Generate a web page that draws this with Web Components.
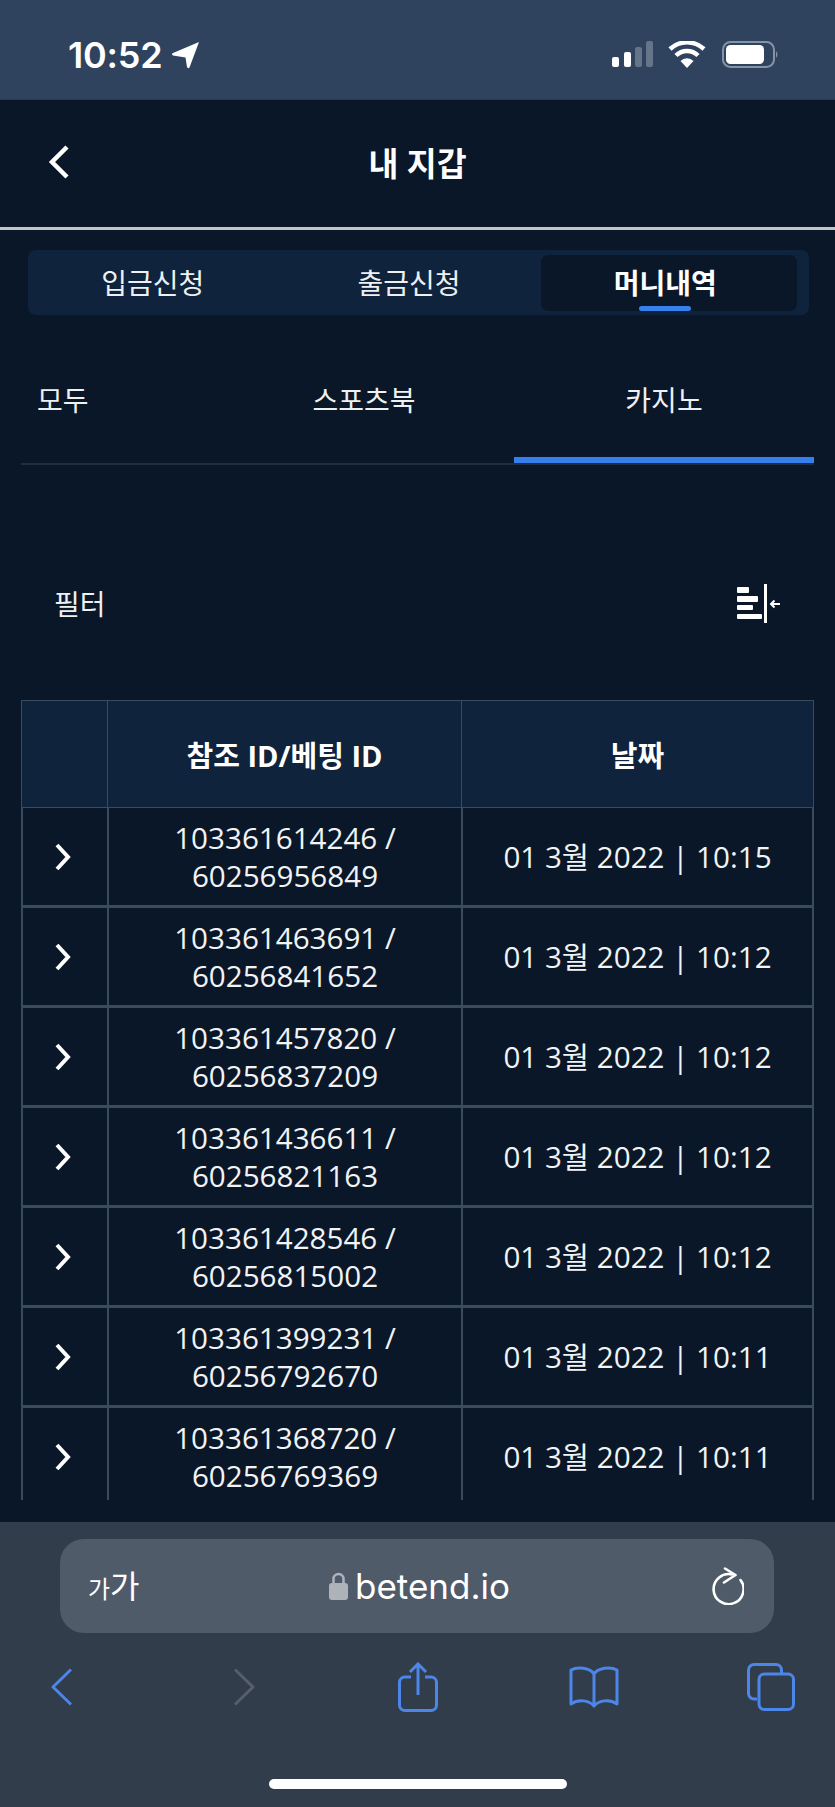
<!DOCTYPE html>
<html lang="ko">
<head>
<meta charset="utf-8">
<title>내 지갑</title>
<style>
    html, body {
        margin: 0;
        padding: 0;
        background: #0a1728;
    }

    body {
        width: 835px;
        height: 1807px;
        overflow: hidden;
        display: flex;
        flex-direction: column;
        color: #fff;
        font-family: "Noto Sans", "Noto Sans CJK KR", sans-serif;
    }
</style>
</head>
<body>
    <status-bar time="10:52"></status-bar>
    <wallet-header>내 지갑</wallet-header>
    <segment-tabs>
        <tab-item>입금신청</tab-item>
        <tab-item>출금신청</tab-item>
        <tab-item active>머니내역</tab-item>
    </segment-tabs>
    <category-tabs></category-tabs>
    <filter-bar>필터</filter-bar>
    <bet-table>
        <bet-row ref-id="103361614246" bet-id="60256956849" date="01 3월 2022 | 10:15"></bet-row>
        <bet-row ref-id="103361463691" bet-id="60256841652" date="01 3월 2022 | 10:12"></bet-row>
        <bet-row ref-id="103361457820" bet-id="60256837209" date="01 3월 2022 | 10:12"></bet-row>
        <bet-row ref-id="103361436611" bet-id="60256821163" date="01 3월 2022 | 10:12"></bet-row>
        <bet-row ref-id="103361428546" bet-id="60256815002" date="01 3월 2022 | 10:12"></bet-row>
        <bet-row ref-id="103361399231" bet-id="60256792670" date="01 3월 2022 | 10:11"></bet-row>
        <bet-row ref-id="103361368720" bet-id="60256769369" date="01 3월 2022 | 10:11"></bet-row>
    </bet-table>
    <safari-bar url="betend.io"></safari-bar>

<script>
class StatusBar extends HTMLElement {
    constructor() {
        super();
        this.attachShadow({ mode: 'open' });
    }

    connectedCallback() {
        this.shadowRoot.innerHTML = `
            <style>
                :host {
                    display: flex;
                    flex: none;
                    align-items: center;
                    box-sizing: border-box;
                    height: 100px;
                    padding: 10px 55px 0 68px;
                    background: #2f435f;
                    border-bottom: 1px solid #2a3b54;
                }
                .time {
                    font: 600 36px/1 Inter, "Liberation Sans", sans-serif;
                    letter-spacing: -0.2px;
                }
                .loc { margin-left: 8px; }
                .right { margin-left: auto; }
            </style>
            <span class="time">${this.getAttribute('time')}</span>
            <svg class="loc" width="29" height="28" viewBox="0 0 29 28">
                <path d="M28 1 L18.5 26.5 Q17 28 16 26 L14.500 16.500 L2 14.500 Q0 13 2 12 Z" fill="#fff"/>
            </svg>
            <svg class="right" width="168" height="28" viewBox="0 0 168 28">
                <rect x="0" y="16" width="7" height="10" rx="2" fill="#fff"/>
                <rect x="12" y="11" width="7" height="15" rx="2" fill="#fff"/>
                <rect x="23" y="6" width="7" height="20" rx="2" fill="#647489"/>
                <rect x="34" y="0" width="7" height="26" rx="2" fill="#647489"/>
                <path d="M58 8 A25 25 0 0 1 92 8" fill="none" stroke="#fff" stroke-width="4.500"/>
                <path d="M64 14.500 A15.500 15.500 0 0 1 86 14.500" fill="none" stroke="#fff" stroke-width="4.500"/>
                <path d="M68.500 20 A9 9 0 0 1 81.500 20 L75 27 Z" fill="#fff"/>
                <rect x="111" y="1" width="51" height="25" rx="7.500" fill="none" stroke="#8593a6" stroke-width="2"/>
                <rect x="114" y="4" width="38" height="19" rx="4.500" fill="#fff"/>
                <path d="M164 10 Q167 13.500 164 17 Z" fill="#8593a6"/>
            </svg>
        `;
    }
}

class WalletHeader extends HTMLElement {
    constructor() {
        super();
        this.attachShadow({ mode: 'open' });
    }

    connectedCallback() {
        this.shadowRoot.innerHTML = `
            <style>
                :host {
                    display: flex;
                    flex: none;
                    align-items: center;
                    justify-content: center;
                    position: relative;
                    box-sizing: border-box;
                    height: 130px;
                    padding-top: 2px;
                    border-bottom: 3px solid #c2c4c8;
                    font: 700 32.5px/1 "Noto Sans", "Noto Sans CJK KR", sans-serif;
                }
                svg {
                    position: absolute;
                    left: 47px;
                    top: 44px;
                }
            </style>
            <svg width="24" height="36" viewBox="0 0 24 36">
                <path d="M20 3 L5 18 L20 33" fill="none" stroke="#fff" stroke-width="4.500"/>
            </svg>
            <slot></slot>
        `;
    }
}

class SegmentTabs extends HTMLElement {
    constructor() {
        super();
        this.attachShadow({ mode: 'open' });
    }

    connectedCallback() {
        this.shadowRoot.innerHTML = `
            <style>
                :host {
                    display: grid;
                    flex: none;
                    grid-template-columns: repeat(3, 1fr);
                    box-sizing: border-box;
                    width: 781px;
                    height: 65px;
                    margin: 20px 0 0 28px;
                    padding: 5px 12px 4px 0;
                    background: #10233c;
                    border-radius: 8px;
                }
            </style>
            <slot></slot>
        `;
    }
}

class TabItem extends HTMLElement {
    constructor() {
        super();
        this.attachShadow({ mode: 'open' });
    }

    connectedCallback() {
        this.shadowRoot.innerHTML = `
            <style>
                :host {
                    display: flex;
                    align-items: center;
                    justify-content: center;
                    position: relative;
                    padding: 0 7px 2px 0;
                    font-size: 28px;
                    color: #eef0f2;
                }
                :host([active]) {
                    background: #0a1728;
                    border-radius: 7px;
                    font-weight: 700;
                    color: #fff;
                }
                :host([active])::after {
                    content: "";
                    position: absolute;
                    left: calc(50% - 30px);
                    bottom: 0;
                    width: 52px;
                    height: 5px;
                    background: #3580ed;
                    border-radius: 3px;
                }
            </style>
            <slot></slot>
        `;
    }
}

class CategoryTabs extends HTMLElement {
    constructor() {
        super();
        this.attachShadow({ mode: 'open' });
    }

    connectedCallback() {
        this.shadowRoot.innerHTML = `
            <style>
                :host {
                    display: grid;
                    flex: none;
                    grid-template-columns: 193px 300px 300px;
                    box-sizing: border-box;
                    width: 793px;
                    height: 150px;
                    margin-left: 21px;
                    border-bottom: 2px solid #1f2d40;
                    font-size: 28px;
                    color: #eef0f2;
                }
                div {
                    display: flex;
                    align-items: center;
                    justify-content: center;
                    height: 148px;
                    padding-top: 19px;
                    box-sizing: border-box;
                }
                .first { justify-content: flex-start; padding-left: 16px; }
                .on { border-bottom: 6px solid #3580ed; padding-top: 25px; }
            </style>
            <div class="first">모두</div>
            <div>스포츠북</div>
            <div class="on">카지노</div>
        `;
    }
}

class FilterBar extends HTMLElement {
    constructor() {
        super();
        this.attachShadow({ mode: 'open' });
    }

    connectedCallback() {
        this.shadowRoot.innerHTML = `
            <style>
                :host {
                    display: flex;
                    flex: none;
                    align-items: center;
                    justify-content: space-between;
                    box-sizing: border-box;
                    height: 60px;
                    margin: 108px 0 67px;
                    padding: 0 55px 0 54px;
                    font-size: 28px;
                    color: #eef0f2;
                }
            </style>
            <slot></slot>
            <svg width="43" height="39" viewBox="0 0 43 39">
                <rect x="0" y="3" width="12" height="6" rx="1" fill="#fff"/>
                <rect x="0" y="12" width="21" height="6" rx="1" fill="#fff"/>
                <rect x="0" y="21" width="16" height="5" rx="1" fill="#fff"/>
                <rect x="0" y="30" width="25" height="5" rx="1" fill="#fff"/>
                <rect x="27" y="0" width="3" height="39" fill="#fff"/>
                <path d="M34 20 H43 M37.500 16.500 L34 20 L37.500 23.500" fill="none" stroke="#fff" stroke-width="2"/>
            </svg>
        `;
    }
}

class BetTable extends HTMLElement {
    constructor() {
        super();
        this.attachShadow({ mode: 'open' });
    }

    connectedCallback() {
        this.shadowRoot.innerHTML = `
            <style>
                :host {
                    display: block;
                    flex: none;
                    box-sizing: border-box;
                    width: 793px;
                    height: 800px;
                    margin: 0 0 22px 21px;
                    overflow: hidden;
                }
                .head {
                    display: grid;
                    grid-template-columns: 86px 354px 1fr;
                    box-sizing: border-box;
                    height: 108px;
                    background: #10233c;
                    border: 1px solid #3a4a5f;
                    font: 700 29px "Open Sans", "Noto Sans CJK KR", sans-serif;
                }
                .head div {
                    display: flex;
                    align-items: center;
                    justify-content: center;
                    border-right: 1px solid #3a4a5f;
                }
                .head div:first-child { margin-left: -1px; }
                .head div:last-child { border-right: 0; }
            </style>
            <div class="head">
                <div></div>
                <div>참조 ID/베팅 ID</div>
                <div>날짜</div>
            </div>
            <slot></slot>
        `;
    }
}

class BetRow extends HTMLElement {
    constructor() {
        super();
        this.attachShadow({ mode: 'open' });
    }

    connectedCallback() {
        this.shadowRoot.innerHTML = `
            <style>
                :host {
                    display: grid;
                    grid-template-columns: 86px 354px 1fr;
                    box-sizing: border-box;
                    height: 100px;
                    border-left: 2px solid #3a4a5f;
                    border-right: 2px solid #3a4a5f;
                    border-bottom: 3px solid #3a4a5f;
                    font: 400 29.6px/38px "Open Sans", "Noto Sans CJK KR", sans-serif;
                    color: #f1f3f5;
                }
                div {
                    display: flex;
                    align-items: center;
                    justify-content: center;
                    text-align: center;
                    padding-top: 1px;
                    border-right: 2px solid #3a4a5f;
                }
                div:first-child { margin-left: -2px; }
                div:last-child { border-right: 0; }
                svg { margin-right: 4px; }
            </style>
            <div>
                <svg width="20" height="28" viewBox="0 0 20 28">
                    <path d="M4 2 L15 14 L4 26" fill="none" stroke="#fff" stroke-width="4"/>
                </svg>
            </div>
            <div>${this.getAttribute('ref-id')} /<br>${this.getAttribute('bet-id')}</div>
            <div>${this.getAttribute('date')}</div>
        `;
    }
}

class SafariBar extends HTMLElement {
    constructor() {
        super();
        this.attachShadow({ mode: 'open' });
    }

    connectedCallback() {
        this.shadowRoot.innerHTML = `
            <style>
                :host {
                    display: block;
                    flex: none;
                    box-sizing: border-box;
                    height: 285px;
                    padding-top: 17px;
                    background: #323d4b;
                }
                .address {
                    display: grid;
                    grid-template-columns: 1fr auto 1fr;
                    align-items: center;
                    width: 714px;
                    height: 94px;
                    margin-left: 60px;
                    padding: 0 30px 0 28px;
                    box-sizing: border-box;
                    background: #505b69;
                    border-radius: 24px;
                }
                .aa { font-size: 32px; line-height: 1; }
                .aa small { font-size: 24px; }
                .url {
                    display: flex;
                    align-items: center;
                    gap: 7px;
                    padding-left: 7px;
                    font: 400 35px/1 Inter, "Liberation Sans", sans-serif;
                }
                .reload { justify-self: end; }
                .nav {
                    display: flex;
                    align-items: center;
                    height: 52px;
                    margin-top: 28px;
                    padding-left: 51px;
                }
                .home {
                    width: 298px;
                    height: 10px;
                    margin: 66px 0 0 269px;
                    background: #fff;
                    border-radius: 5px;
                }
            </style>
            <div class="address">
                <span class="aa"><small>가</small>가</span>
                <span class="url">
                    <svg width="19" height="28" viewBox="0 0 19 28">
                        <path d="M4.500 12 V7 a5 5 0 0 1 10 0 V12" fill="none" stroke="#aeb3ba" stroke-width="2.500"/>
                        <rect x="0" y="11" width="19" height="17" rx="3" fill="#aeb3ba"/>
                    </svg>
                    ${this.getAttribute('url')}
                </span>
                <svg class="reload" width="32" height="38" viewBox="0 0 32 38">
                    <path d="M20 7.500 A15 15 0 1 0 28.500 13" fill="none" stroke="#fff" stroke-width="2.600" stroke-linecap="round"/>
                    <path d="M13 1.500 L23.500 8 L12 15.500" fill="none" stroke="#fff" stroke-width="2.600" stroke-linecap="round" stroke-linejoin="round"/>
                </svg>
            </div>
            <div class="nav">
                <svg width="21" height="38" viewBox="0 0 21 38">
                    <path d="M20 1.500 L2 19 L20 36.500" fill="none" stroke="#4c86e8" stroke-width="3" stroke-linejoin="round"/>
                </svg>
                <svg style="margin-left:161px" width="22" height="38" viewBox="0 0 22 38">
                    <path d="M2 1.500 L20 19 L2 36.500" fill="none" stroke="#575f6a" stroke-width="3" stroke-linejoin="round"/>
                </svg>
                <svg style="margin-left:143px" width="40" height="50" viewBox="0 0 40 50">
                    <path d="M13 15 H7 a5.500 5.500 0 0 0 -5.500 5.500 V43 a5.500 5.500 0 0 0 5.500 5.500 H33 a5.500 5.500 0 0 0 5.500 -5.500 V20.500 a5.500 5.500 0 0 0 -5.500 -5.500 H27" fill="none" stroke="#4c86e8" stroke-width="3"/>
                    <path d="M20 33 V2 M12 10 L20 2 L28 10" fill="none" stroke="#4c86e8" stroke-width="3"/>
                </svg>
                <svg style="margin-left:131px" width="50" height="42" viewBox="0 0 50 42">
                    <path d="M25 8 C21 2 9 0 2 4 V38 C9 33 20 34 25 40 C30 34 41 33 48 38 V4 C41 0 29 2 25 8 V40" fill="none" stroke="#4c86e8" stroke-width="3" stroke-linejoin="round"/>
                </svg>
                <svg style="margin-left:128px" width="48" height="48" viewBox="0 0 48 48">
                    <path d="M10 36 H7 a5.500 5.500 0 0 1 -5.500 -5.500 V7 a5.500 5.500 0 0 1 5.500 -5.500 H29 a5.500 5.500 0 0 1 5.500 5.500 V11" fill="none" stroke="#4c86e8" stroke-width="3"/>
                    <rect x="12" y="11" width="34.500" height="35.500" rx="5.500" fill="none" stroke="#4c86e8" stroke-width="3"/>
                </svg>
            </div>
            <div class="home"></div>
        `;
    }
}

customElements.define('status-bar', StatusBar);
customElements.define('wallet-header', WalletHeader);
customElements.define('segment-tabs', SegmentTabs);
customElements.define('tab-item', TabItem);
customElements.define('category-tabs', CategoryTabs);
customElements.define('filter-bar', FilterBar);
customElements.define('bet-table', BetTable);
customElements.define('bet-row', BetRow);
customElements.define('safari-bar', SafariBar);
</script>
</body>
</html>
